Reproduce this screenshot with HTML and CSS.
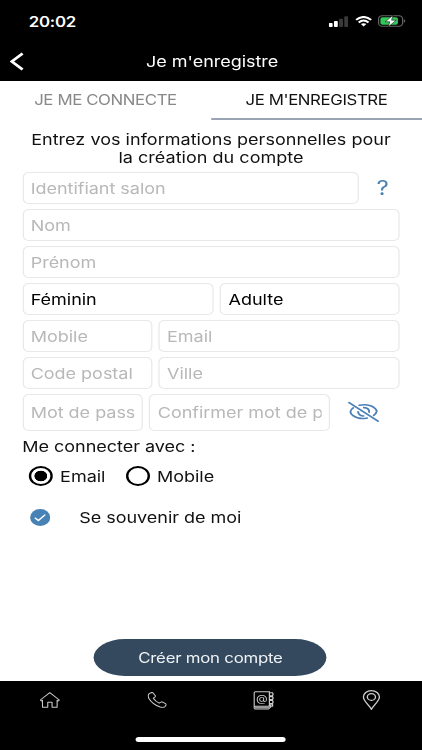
FILE: index.html
```html
<!DOCTYPE html>
<html lang="fr">
<head>
    <meta charset="UTF-8">
    <meta name="viewport" content="width=device-width, initial-scale=1.0">
    <title>Je m'enregistre</title>
    <link rel="stylesheet" href="styles.css">
</head>
<body>
    <div class="screen">
        <div class="status-bar">
            <span class="time">20:02</span>
            <div class="status-icons">
                <svg width="16" height="11" viewBox="0 0 16 11">
                    <rect x="0" y="7" width="3.2" height="4" rx="0.8" fill="#fff"/>
                    <rect x="4.3" y="5" width="3.2" height="6" rx="0.8" fill="#fff"/>
                    <rect x="8.6" y="2.7" width="3.2" height="8.3" rx="0.8" fill="#3a3a3a"/>
                    <rect x="12.9" y="0.3" width="3.2" height="10.7" rx="0.8" fill="#3a3a3a"/>
                </svg>
                <svg class="wifi" width="14" height="11" viewBox="0 0 14 11" fill="none" stroke="#fff" stroke-width="1.9">
                    <path d="M0.7 3.9Q7 -2 13.3 3.9"/>
                    <path d="M2.9 6.5Q7 2.7 11.1 6.5"/>
                    <path d="M4.7 8.1Q7 6.2 9.3 8.1L7 10.6Z" fill="#fff" stroke="none"/>
                </svg>
                <svg width="23" height="12" viewBox="0 0 23 12">
                    <rect x="0.5" y="0.7" width="20" height="10.6" rx="3" fill="none" stroke="#666"/>
                    <rect x="2" y="2.2" width="14.6" height="7.6" rx="1.8" fill="#34c759"/>
                    <path d="M21.5 4.3v3.4q1.3-.5 1.3-1.7t-1.3-1.7z" fill="#666"/>
                    <path d="M12.5 0.2L6 6.8h3.8L8.6 11.8L15.2 5.2h-3.9z" fill="#fff" stroke="#000" stroke-width="0.5"/>
                </svg>
            </div>
        </div>

        <div class="header">
            <svg class="back" width="12" height="19" viewBox="0 0 12 19" fill="none" stroke="#fff" stroke-width="2.4">
                <path d="M10.8 1.5L1.8 9.5L10.8 17.5"/>
            </svg>
            <h1>Je m'enregistre</h1>
        </div>

        <div class="tabs">
            <div class="tab">JE ME CONNECTE</div>
            <div class="tab active">JE M'ENREGISTRE</div>
        </div>

        <form class="form">
            <p class="intro">Entrez vos informations personnelles pour<br>la création du compte</p>

            <div class="row">
                <input class="salon" type="text" placeholder="Identifiant salon">
                <span class="help">?</span>
            </div>
            <div class="row">
                <input type="text" placeholder="Nom">
            </div>
            <div class="row">
                <input type="text" placeholder="Prénom">
            </div>
            <div class="row">
                <input class="gender" type="text" value="Féminin">
                <input type="text" value="Adulte">
            </div>
            <div class="row">
                <input class="short" type="text" placeholder="Mobile">
                <input type="text" placeholder="Email">
            </div>
            <div class="row">
                <input class="short" type="text" placeholder="Code postal">
                <input type="text" placeholder="Ville">
            </div>
            <div class="row row-password">
                <input class="password" type="text" placeholder="Mot de pass">
                <input class="confirm" type="text" placeholder="Confirmer mot de p">
                <svg class="eye" width="26" height="22" viewBox="0 0 26 22" fill="none" stroke="#4a80b5" stroke-width="1.6" stroke-linecap="round">
                    <path d="M0.9 1.6L25 20.2"/>
                    <path d="M9.4 4.3C16.5 2.6 22.5 5.4 24 10.2Q23.6 12.6 21.4 14.4"/>
                    <path d="M4.4 6.8C1.2 9.2 1.3 12.2 4.2 14.6C7.6 17.6 11.6 18.1 16 17"/>
                    <path d="M13.2 6.6Q17.8 7 17.7 11.2"/>
                    <path d="M8.4 10.8Q9 14.6 13 15"/>
                </svg>
            </div>

            <p class="connect-label">Me connecter avec :</p>
            <div class="radios">
                <span class="radio checked"></span>
                <span class="radio-label">Email</span>
                <span class="radio"></span>
                <span class="radio-label">Mobile</span>
            </div>

            <div class="remember">
                <svg width="17" height="17" viewBox="0 0 17 17">
                    <circle cx="8.5" cy="8.5" r="8.4" fill="#4682b4"/>
                    <path d="M4 8.8L7 11.5L12.7 5.6" fill="none" stroke="#fff" stroke-width="1.3"/>
                </svg>
                <span>Se souvenir de moi</span>
            </div>

            <button class="submit-btn" type="button">Créer mon compte</button>
        </form>

        <div class="bottom-nav">
            <div class="nav-items">
                <div class="nav-item">
                    <svg width="17" height="16" viewBox="0 0 17 16" fill="none" stroke="#ccc" stroke-width="0.9" stroke-linejoin="round">
                        <path d="M0.6 8L8.5 0.7L16.4 8L15.6 9L14.6 8.2V15.3H10.4V10.3H6.8V15.3H2.4V8.2L1.4 9Z"/>
                    </svg>
                </div>
                <div class="nav-item">
                    <svg width="16" height="16" viewBox="0 0 16 16" fill="none" stroke="#ccc" stroke-width="0.9" stroke-linejoin="round">
                        <path d="M1.2 1.7L3.4 0.5L4.4 0.8L6.5 3.8L6.2 5L4.8 6.2Q6.3 9.2 9.7 11.2L11.2 10L12.3 9.9L15.2 11.8L15.5 13L14.3 14.8Q12.8 15.8 10.5 15Q4 12.4 1 6.2Q-0.1 3.6 1.2 1.7Z"/>
                    </svg>
                </div>
                <div class="nav-item">
                    <svg width="18" height="19" viewBox="0 0 18 19" fill="none" stroke="#ccc">
                        <path d="M2 0.7H13.5V15.3H2Q0.8 15.3 0.8 16.7V2Q0.8 0.7 2 0.7Z"/>
                        <path d="M0.8 16.7Q0.8 18.1 2 18.1H12.7L14.5 16V14"/>
                        <path d="M1 16.6H13.4" stroke="#999" stroke-width="1.6"/>
                        <path d="M13.5 1.7h2.6q1 1.5 0 3h-2.6M13.5 5.6h2.6q1 1.5 0 3h-2.6M13.5 9.5h2.6q1 1.5 0 3h-2.6M13.5 13.3h2.6v2h-2" stroke-width="1.1"/>
                        <text x="7.2" y="11.3" text-anchor="middle" class="at">@</text>
                    </svg>
                </div>
                <div class="nav-item">
                    <svg width="15" height="20" viewBox="0 0 15 20" fill="none" stroke="#ccc" stroke-width="1.15">
                        <path d="M7.5 19.3C6 15.5 0.8 11.2 0.8 7A6.7 6.4 0 0 1 14.2 7C14.2 11.2 9 15.5 7.5 19.3Z"/>
                        <circle cx="7.5" cy="7" r="3.4"/>
                    </svg>
                </div>
            </div>
            <div class="home-indicator"></div>
        </div>
    </div>
</body>
</html>
```

FILE: styles.css
```css
* {
    margin: 0;
    padding: 0;
    box-sizing: border-box;
}

body {
    font-family: Inter, 'Liberation Sans', sans-serif;
    background: #fff;
    color: #111;
    overflow: hidden;
}

.screen {
    width: 351.67px;
    height: 750px;
    display: flex;
    flex-direction: column;
    font-size: 15px;
    letter-spacing: -0.02px;
    transform: scaleX(1.2);
    transform-origin: 0 0;
}

.status-bar {
    height: 42px;
    padding: 0 13.6px 0 24px;
    background: #000;
    color: #fff;
    display: flex;
    align-items: center;
    justify-content: space-between;
}

.time {
    font-size: 14px;
    font-weight: 600;
    letter-spacing: -0.2px;
}

.status-icons {
    display: flex;
    align-items: center;
}

.wifi {
    margin: 0 5px 0 6px;
}

.header {
    height: 39px;
    padding-left: 8px;
    background: #000;
    color: #fff;
    display: flex;
    align-items: center;
}

.header h1 {
    flex: 1;
    margin-right: 18px;
    text-align: center;
    font-size: 15px;
    font-weight: 400;
}

.tabs {
    height: 39px;
    display: flex;
}

.tab {
    flex: 1;
    line-height: 38px;
    text-align: center;
    font-size: 14px;
    letter-spacing: -0.33px;
    color: #888;
}

.tab.active {
    height: 39px;
    color: #111;
    border-bottom: 2px solid #99a5b5;
}

.form {
    flex: 1;
    padding: 11px 18.6px 0;
    display: flex;
    flex-direction: column;
}

.intro {
    margin: 0 -10px 5px;
    line-height: 18px;
    text-align: center;
    letter-spacing: 0.02px;
}

.row {
    height: 32px;
    margin-bottom: 5px;
    display: flex;
    gap: 5.3px;
}

.row-password {
    height: 37px;
}

input {
    flex: 1;
    min-width: 0;
    height: 100%;
    padding: 0 6px;
    border: 1px solid #e8e8e8;
    border-radius: 5px;
    background: #fff;
    color: #000;
    font: inherit;
    letter-spacing: inherit;
    outline: none;
}

input::placeholder {
    color: #b8b8b8;
    opacity: 1;
}

.salon {
    flex: 0 0 280.8px;
}

.gender {
    flex: 0 0 159.6px;
}

.short {
    flex: 0 0 108.3px;
}

.password {
    flex: 0 0 100.6px;
}

.confirm {
    flex: 0 0 150.6px;
}

.help {
    padding-left: 9px;
    line-height: 32px;
    font-size: 20px;
    color: #4682b4;
}

.eye {
    margin: 7px 0 0 9.5px;
}

.connect-label {
    margin-top: 1px;
    line-height: 20px;
}

.radios {
    height: 38px;
    padding-left: 5.5px;
    display: flex;
    align-items: center;
}

.radio {
    width: 20px;
    height: 20px;
    border: 2px solid #000;
    border-radius: 50%;
}

.radio.checked {
    background: radial-gradient(circle, #000 5px, #fff 5.6px);
}

.radio-label {
    margin: 0 17px 0 6px;
}

.remember {
    height: 44px;
    padding-left: 6.6px;
    display: flex;
    align-items: center;
    gap: 23.8px;
}

.submit-btn {
    width: 194px;
    height: 37px;
    margin: auto auto 5px 59.8px;
    border: none;
    border-radius: 26px / 18.5px;
    background: #34495e;
    color: #f0f3f6;
    font: inherit;
    font-size: 14px;
    letter-spacing: -0.2px;
}

.bottom-nav {
    height: 69px;
    background: #000;
}

.nav-items {
    height: 38px;
    padding: 0 12.6px 0 11.4px;
    display: flex;
    justify-content: space-between;
}

.nav-item {
    width: 60px;
    display: flex;
    align-items: center;
    justify-content: center;
}

.at {
    fill: #ccc;
    stroke: none;
    font-size: 10px;
}

.home-indicator {
    width: 125px;
    height: 5px;
    margin: 18px auto 0;
    border-radius: 3px;
    background: #fff;
}
```
